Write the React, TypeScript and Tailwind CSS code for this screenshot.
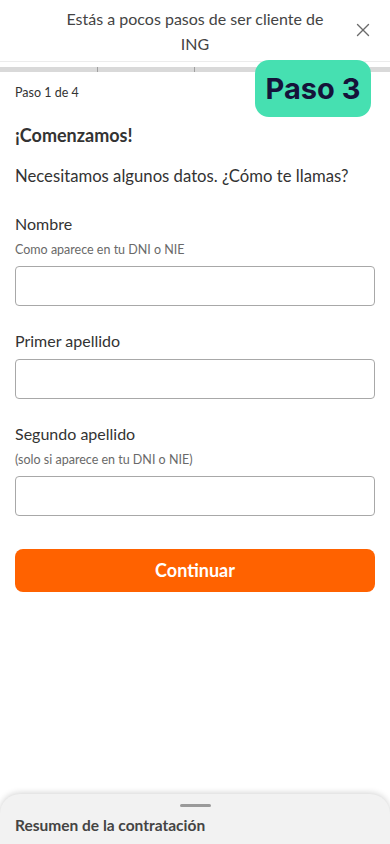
import { X } from "lucide-react";

function Field({ label, hint }: { label: string; hint?: string }) {
  return (
    <div className="flex flex-col">
      <label className="text-[16px] leading-[20px] text-[#333]">{label}</label>
      {hint && <span className="mt-[8px] text-[12.5px] leading-[16px] text-[#696969]">{hint}</span>}
      <input
        type="text"
        className="mt-[8px] h-[40px] w-full rounded-[4px] border border-[#a8a8a8] bg-white px-3 text-[15px] outline-none"
      />
    </div>
  );
}

export default function App() {
  return (
    <div
      className="relative min-h-[844px] w-[390px] overflow-hidden bg-white"
      style={{ fontFamily: "Lato, 'Noto Sans', sans-serif" }}
    >
      {/* Header */}
      <header className="relative flex h-[62px] items-center justify-center border-b border-[#ececec]">
        <p className="w-[272px] text-center text-[16px] leading-[25px] text-[#444]">
          Estás a pocos pasos de ser cliente de ING
        </p>
        <button type="button" className="absolute right-[16px] top-[19px] text-[#6b6b6b]">
          <X size={22} strokeWidth={1.5} />
        </button>
      </header>

      {/* Progress */}
      <div className="mt-[5px] grid h-[5px] grid-cols-4 divide-x divide-[#a0a0a0] bg-[#d9d9d9]">
        <div />
        <div />
        <div />
        <div />
      </div>

      {/* Step badge */}
      <div
        className="absolute left-[255px] top-[60px] flex h-[57px] w-[116px] items-center justify-center rounded-[14px] bg-[#46e0b1] text-[29px] font-bold text-[#15133a]"
        style={{ fontFamily: "Inter, 'Noto Sans', sans-serif" }}
      >
        Paso 3
      </div>

      <main className="px-[15px] pt-[13px]">
        <p className="text-[12.5px] leading-[16px] text-[#333]">Paso 1 de 4</p>
        <h1 className="mt-[22px] text-[18px] font-bold leading-[24px] text-[#333]">¡Comenzamos!</h1>
        <p className="mt-[18px] text-[16.7px] leading-[22px] text-[#333]">
          Necesitamos algunos datos. ¿Cómo te llamas?
        </p>

        <div className="mt-[27px] flex flex-col gap-[25px]">
          <Field label="Nombre" hint="Como aparece en tu DNI o NIE" />
          <Field label="Primer apellido" />
          <Field label="Segundo apellido" hint="(solo si aparece en tu DNI o NIE)" />
        </div>

        <button
          type="button"
          className="mt-[33px] flex h-[43px] w-full items-center justify-center rounded-[8px] bg-[#ff6200] text-[18px] font-bold text-white"
        >
          Continuar
        </button>
      </main>

      {/* Bottom sheet */}
      <div className="absolute bottom-0 left-0 right-0 h-[50px] rounded-t-[20px] bg-[#f2f2f2] px-[15px] shadow-[0_-1px_6px_rgba(0,0,0,0.18)]">
        <div className="mx-auto mt-[10px] h-[3px] w-[31px] rounded-full bg-[#9a9a9a]" />
        <p className="mt-[8px] text-[15.5px] font-bold leading-[20px] text-[#444]">Resumen de la contratación</p>
      </div>
    </div>
  );
}
